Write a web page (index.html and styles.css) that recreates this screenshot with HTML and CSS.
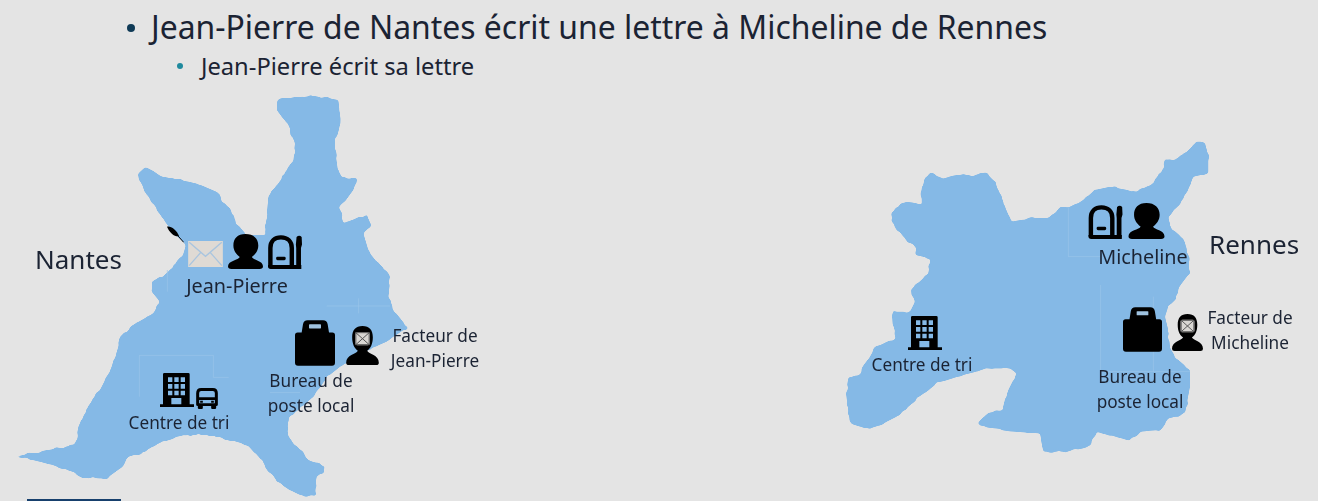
FILE: index.html
```html
<!DOCTYPE html>
<html lang="fr">
<head>
<meta charset="utf-8">
<title>Jean-Pierre écrit sa lettre</title>
<link rel="stylesheet" href="styles.css">
</head>
<body>
<main class="slide">
  <svg class="atlas" width="1318" height="501" viewBox="0 0 1318 501" aria-hidden="true">
    <defs>
      <filter id="coast" x="-5%" y="-5%" width="110%" height="110%">
        <feTurbulence type="fractalNoise" baseFrequency="0.09" numOctaves="2" seed="4" result="noise"/>
        <feDisplacementMap in="SourceGraphic" in2="noise" scale="4" xChannelSelector="R" yChannelSelector="G" result="rough"/>
        <feGaussianBlur in="rough" stdDeviation="1.3" result="soft"/>
        <feComponentTransfer in="soft" result="mask">
          <feFuncA type="linear" slope="5" intercept="-2"/>
        </feComponentTransfer>
      </filter>
      <symbol id="person" viewBox="0 0 104 104"><path d="M52 0C76 0 90 14 90 34C90 50 80 62 71 68C74 78 104 78 104 96Q104 104 94 104H10Q0 104 0 96C0 78 32 78 35 68C26 62 16 50 16 34C16 14 28 0 52 0Z"/></symbol>
      <symbol id="mailbox" viewBox="0 0 100 100"><path d="M7 93V38C7 18 20 7 38 7C58 7 70 20 70 38V92" fill="none" stroke="#000" stroke-width="13"/><path d="M0 88H98V100H8Q0 100 0 92Z"/><rect x="24" y="64" width="28" height="10" rx="4"/><path d="M84 6Q92 -2 99 6L100 28L97 38V94Q97 100 90 100Q83 100 83 94V38L82 28Z"/></symbol>
      <symbol id="envelope" viewBox="0 0 104 78"><rect width="104" height="78" fill="#dfdad4"/><path d="M3 4L52 46L101 4M3 74L38 34M101 74L66 34" fill="none" stroke="#a9c5df" stroke-width="4"/></symbol>
      <symbol id="quill" viewBox="0 0 52 52"><path d="M0 2C10 -2 30 12 37 31C26 35 8 22 0 2Z"/><path d="M30 26L51 50" stroke="#000" stroke-width="3"/></symbol>
      <symbol id="bag" viewBox="0 0 120 137"><path d="M8 37H20L24 12Q26 0 38 0H84Q96 0 98 12L102 37H112Q120 37 120 45V128Q120 137 111 137H9Q0 137 0 128V45Q0 37 8 37Z"/><rect x="42" y="12" width="36" height="13" rx="2" fill="#9fc2e0"/></symbol>
      <symbol id="postman" viewBox="0 0 98 117"><path d="M49 0C70 0 80 12 80 34C80 54 73 68 63 74C68 84 98 86 98 110Q98 117 90 117H8Q0 117 0 110C0 86 30 84 35 74C25 68 18 54 18 34C18 12 28 0 49 0Z"/><rect x="27" y="18" width="44" height="40" rx="6" fill="#d9d7d3"/><path d="M29 20L69 56M69 20L29 56M29 20H69V56H29Z" fill="none" stroke="#555" stroke-width="3"/></symbol>
      <symbol id="building" viewBox="0 0 102 102"><path d="M9 4Q9 0 13 0H85Q89 0 89 4V94H102V102H0V94H9ZM24 13V27H37V13ZM43 13V27H56V13ZM62 13V27H75V13ZM24 33V47H37V33ZM43 33V47H56V33ZM62 33V47H75V33ZM24 53V67H37V53ZM43 53V67H56V53ZM62 53V67H75V53ZM34 75V94H64V75Z" fill-rule="evenodd"/></symbol>
      <symbol id="bus" viewBox="0 0 65 63"><path d="M15 0H50Q65 0 65 16V50Q65 54 60 54V60Q60 63 56 63H48Q45 63 45 60V54H20V60Q20 63 17 63H9Q5 63 5 60V54Q0 54 0 50V16Q0 0 15 0ZM15 9Q9 9 9 15V28H56V15Q56 9 50 9ZM9 36V46H56V36Z" fill-rule="evenodd"/><path d="M12 38H20V44H12ZM45 38H53V44H45Z"/></symbol>
    </defs>

    <g class="land" filter="url(#coast)">
      <svg x="0" y="80" width="440" height="421" viewBox="0 0 1320 1263">
        <path d="M832 60L880 52L945 48L1015 60L1022 120L1005 180L1010 225L1020 290L1072 295L1060 330L1020 385L1030 430L1070 415L1105 402L1110 440L1090 460L1105 510L1145 560L1172 590L1165 650L1185 695L1222 742L1160 785L1090 815L1030 855L980 895L930 960L870 1010L860 1040L865 1065L890 1100L925 1140L975 1160L975 1180L950 1185L945 1250L900 1245L850 1220L800 1170L770 1120L725 1090L640 1065L560 1065L490 1085L420 1120L385 1130L375 1155L320 1195L260 1195L190 1165L120 1145L45 1130L130 1112L225 1095L235 1040L260 985L300 930L335 860L360 770L390 740L460 700L480 665L455 635L452 605L500 580L545 530L555 490L520 460L470 390L440 345L410 285L435 262L490 290L590 310L660 340L665 365L690 385L710 430L740 465L795 465L805 350L830 310L880 240L885 190L860 130L830 90Z"/>
      </svg>
      <svg x="840" y="130" width="478" height="330" viewBox="0 0 1434 990">
        <path d="M250 145L270 130L310 145L350 135L400 135L440 130L465 155L490 215L515 275L545 270L560 265L630 262L665 230L685 232L730 210L765 180L810 170L890 185L930 165L965 125L975 90L1010 85L1050 60L1065 35L1095 35L1105 80L1105 130L1060 140L1040 190L1005 240L988 265L995 295L1030 325L1045 370L1048 430L1018 470L1010 505L985 530L975 560L985 600L990 650L1010 685L1050 720L1050 770L1035 850L985 865L960 900L900 905L870 935L830 925L770 905L750 950L680 965L610 965L600 910L520 905L440 895L412 880L440 850L490 840L505 780L530 730L510 715L450 715L370 735L290 760L230 810L170 860L90 900L30 880L18 790L25 745L60 730L105 650L165 625L158 545L210 545L225 515L212 480L265 430L272 385L225 375L230 355L190 320L152 270L155 245L195 215L245 220L245 170Z"/>
      </svg>
    </g>
    <svg x="0" y="80" width="440" height="421" viewBox="0 0 1320 1263">
      <path class="seam" d="M502 570V635M418 950V826H640V892H686M980 678H1170M1076 655V700M810 938H900"/>
    </svg>
    <svg x="840" y="130" width="478" height="330" viewBox="0 0 1434 990">
      <path class="seam" d="M685 232V380H780M782 465V725H1050M940 500V725"/>
    </svg>

    <use href="#quill" x="167" y="226" width="17" height="17"/>
    <use href="#envelope" x="188" y="241" width="35" height="26"/>
    <use href="#person" x="228" y="234" width="35" height="35"/>
    <use href="#mailbox" x="268" y="235" width="34" height="34"/>
    <use href="#bag" x="295" y="320" width="40" height="46"/>
    <use href="#postman" x="346" y="326" width="33" height="39"/>
    <use href="#building" x="160" y="373" width="34" height="34"/>
    <use href="#bus" x="196" y="388" width="22" height="21"/>

    <use href="#mailbox" x="1088" y="205" width="35" height="34"/>
    <use href="#person" x="1128" y="203" width="37" height="36"/>
    <use href="#bag" x="1123" y="307" width="39" height="45"/>
    <use href="#postman" x="1172" y="314" width="31" height="37"/>
    <use href="#building" x="908" y="316" width="34" height="34"/>
  </svg>

  <header class="outline">
    <ul class="level-one">
      <li>Jean-Pierre de Nantes écrit une lettre à Micheline de Rennes
        <ul class="level-two">
          <li>Jean-Pierre écrit sa lettre</li>
        </ul>
      </li>
    </ul>
  </header>

  <span class="city city-nantes">Nantes</span>
  <span class="city city-rennes">Rennes</span>

  <span class="label name name-jp">Jean-Pierre</span>
  <span class="label name name-mi">Micheline</span>
  <span class="label at-facteur-n">Facteur de<br>Jean-Pierre</span>
  <span class="label at-bureau-n">Bureau de<br>poste local</span>
  <span class="label at-tri-n">Centre de tri</span>
  <span class="label at-tri-r">Centre de tri</span>
  <span class="label at-bureau-r">Bureau de<br>poste local</span>
  <span class="label at-facteur-r">Facteur de<br>Micheline</span>

  <div class="accent"></div>
</main>
</body>
</html>
```
FILE: styles.css
```css
* { box-sizing: border-box; }
html, body { margin: 0; padding: 0; }
body {
  background: #e4e4e4;
  color: #1b2333;
  font-family: "Noto Sans", "Open Sans", sans-serif;
  overflow: hidden;
}
.slide {
  position: relative;
  width: 1318px;
  height: 501px;
  display: flex;
  flex-direction: column;
  overflow: hidden;
}
.atlas { position: absolute; inset: 0; }
.land path { fill: #85b9e6; }
.seam { fill: none; stroke: #9cc6ea; stroke-width: 2; }

.outline { position: relative; padding: 5px 0 0 125px; }
.level-one, .level-two { list-style: none; margin: 0; padding: 0; }
.level-one > li {
  position: relative;
  padding-left: 26px;
  font-size: 31.9px;
  line-height: 43px;
  white-space: nowrap;
}
.level-one > li::before {
  content: "";
  position: absolute;
  left: 2px;
  top: 19px;
  width: 8px;
  height: 8px;
  border-radius: 50%;
  background: #0f3a56;
}
.level-two { margin-top: 2px; }
.level-two > li {
  position: relative;
  margin-left: 50px;
  font-size: 23.7px;
  line-height: 32px;
}
.level-two > li::before {
  content: "";
  position: absolute;
  left: -24px;
  top: 13px;
  width: 6px;
  height: 6px;
  border-radius: 50%;
  background: #1f8a9e;
}

.city { position: absolute; font-size: 26px; line-height: 34px; }
.city-nantes { left: 35px; top: 242px; }
.city-rennes { left: 1209px; top: 227px; }

.label {
  position: absolute;
  transform: translateX(-50%);
  text-align: center;
  white-space: nowrap;
  font-size: 17.2px;
  line-height: 24.5px;
}
.name { font-size: 19.8px; }
.name-jp { left: 237px; top: 274px; }
.name-mi { left: 1143px; top: 245px; }
.at-facteur-n { left: 435px; top: 324px; }
.at-bureau-n { left: 311px; top: 369px; }
.at-tri-n { left: 179px; top: 411px; }
.at-tri-r { left: 922px; top: 353px; }
.at-bureau-r { left: 1140px; top: 365px; }
.at-facteur-r { left: 1250px; top: 306px; }

.accent {
  margin: auto 0 0 27px;
  width: 94px;
  height: 2px;
  background: #17406d;
}
```
